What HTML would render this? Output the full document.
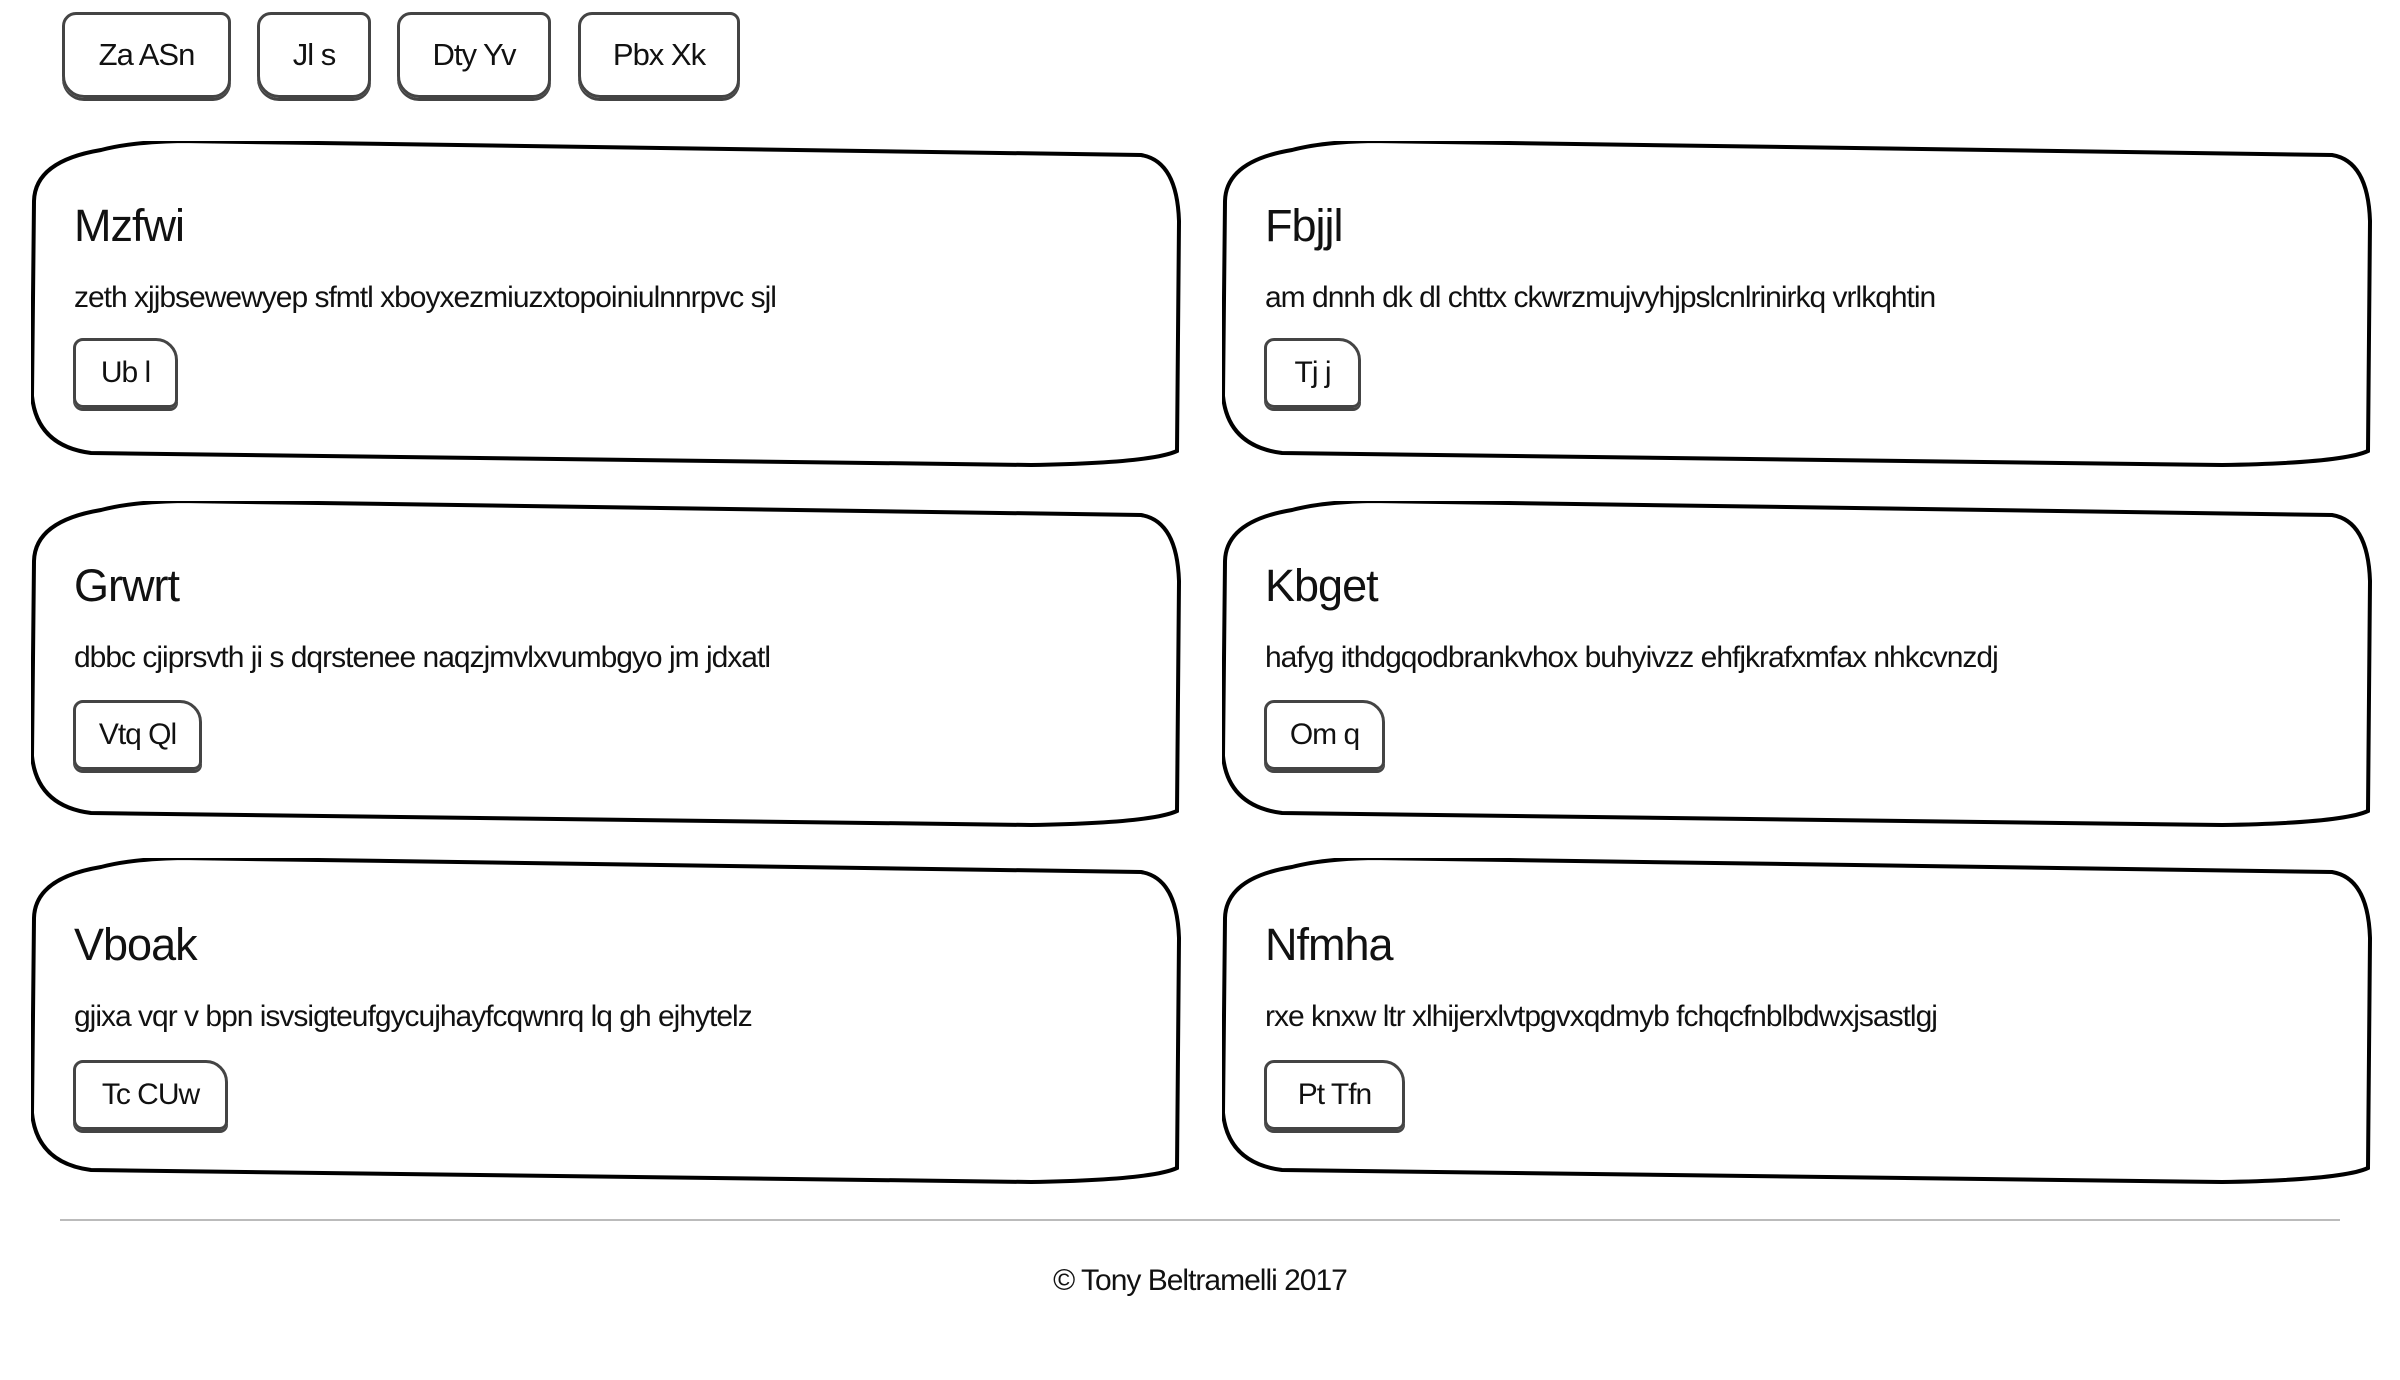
<!DOCTYPE html><html><head><style>
body{margin:0;width:2400px;height:1380px;background:#fff;font-family:"Liberation Sans",sans-serif;color:#111;position:relative;overflow:hidden}
.a{position:absolute}
.nb{position:absolute;top:12px;height:86px;border:3px solid #444;border-radius:14px 10px 18px 22px;box-shadow:0 3px 0 #444;box-sizing:border-box;display:flex;align-items:center;justify-content:center;font-size:31px;letter-spacing:-1px}
.card{position:absolute;width:1152px;height:326px}
.card svg{position:absolute;left:0;top:0}
.t{position:absolute;left:43px;font-size:45px;letter-spacing:-1px;line-height:1}
.p{position:absolute;left:43px;font-size:30px;letter-spacing:-1px;white-space:nowrap;line-height:1}
.b{position:absolute;left:42px;height:70px;border:3px solid #444;border-radius:10px 22px 8px 10px;box-shadow:0 3px 0 #444;box-sizing:border-box;display:flex;align-items:center;justify-content:center;font-size:30px;letter-spacing:-1px}
</style></head><body>
<div class="nb" style="left:62px;width:169px">Za ASn</div>
<div class="nb" style="left:257px;width:114px">Jl s</div>
<div class="nb" style="left:397px;width:154px">Dty Yv</div>
<div class="nb" style="left:578px;width:162px">Pbx Xk</div>

<div class="card" style="left:31px;top:141px"><svg width="1152" height="326"><path d="M70 9 Q4 20 3 60 L1 255 Q6 305 60 312 L1000 324 Q1120 322 1146 310 L1148 80 Q1146 20 1110 14 L150 0 Q100 1 70 9Z" fill="none" stroke="#000" stroke-width="4"/></svg>
<div class="t" style="top:62px">Mzfwi</div><div class="p" style="top:142px">zeth xjjbsewewyep sfmtl xboyxezmiuzxtopoiniulnnrpvc sjl</div><div class="b" style="top:197px;width:105px">Ub l</div></div>
<div class="card" style="left:1222px;top:141px"><svg width="1152" height="326"><path d="M70 9 Q4 20 3 60 L1 255 Q6 305 60 312 L1000 324 Q1120 322 1146 310 L1148 80 Q1146 20 1110 14 L150 0 Q100 1 70 9Z" fill="none" stroke="#000" stroke-width="4"/></svg>
<div class="t" style="top:62px">Fbjjl</div><div class="p" style="top:142px">am dnnh dk dl chttx ckwrzmujvyhjpslcnlrinirkq vrlkqhtin</div><div class="b" style="top:197px;width:97px">Tj j</div></div>

<div class="card" style="left:31px;top:501px"><svg width="1152" height="326"><path d="M70 9 Q4 20 3 60 L1 255 Q6 305 60 312 L1000 324 Q1120 322 1146 310 L1148 80 Q1146 20 1110 14 L150 0 Q100 1 70 9Z" fill="none" stroke="#000" stroke-width="4"/></svg>
<div class="t" style="top:62px">Grwrt</div><div class="p" style="top:142px">dbbc cjiprsvth ji s dqrstenee naqzjmvlxvumbgyo jm jdxatl</div><div class="b" style="top:199px;width:129px">Vtq Ql</div></div>
<div class="card" style="left:1222px;top:501px"><svg width="1152" height="326"><path d="M70 9 Q4 20 3 60 L1 255 Q6 305 60 312 L1000 324 Q1120 322 1146 310 L1148 80 Q1146 20 1110 14 L150 0 Q100 1 70 9Z" fill="none" stroke="#000" stroke-width="4"/></svg>
<div class="t" style="top:62px">Kbget</div><div class="p" style="top:142px">hafyg ithdgqodbrankvhox buhyivzz ehfjkrafxmfax nhkcvnzdj</div><div class="b" style="top:199px;width:121px">Om q</div></div>

<div class="card" style="left:31px;top:858px"><svg width="1152" height="330"><path d="M70 9 Q4 20 3 60 L1 255 Q6 305 60 312 L1000 324 Q1120 322 1146 310 L1148 80 Q1146 20 1110 14 L150 0 Q100 1 70 9Z" fill="none" stroke="#000" stroke-width="4"/></svg>
<div class="t" style="top:64px">Vboak</div><div class="p" style="top:144px">gjixa vqr v bpn isvsigteufgycujhayfcqwnrq lq gh ejhytelz</div><div class="b" style="top:202px;width:155px">Tc CUw</div></div>
<div class="card" style="left:1222px;top:858px"><svg width="1152" height="330"><path d="M70 9 Q4 20 3 60 L1 255 Q6 305 60 312 L1000 324 Q1120 322 1146 310 L1148 80 Q1146 20 1110 14 L150 0 Q100 1 70 9Z" fill="none" stroke="#000" stroke-width="4"/></svg>
<div class="t" style="top:64px">Nfmha</div><div class="p" style="top:144px">rxe knxw ltr xlhijerxlvtpgvxqdmyb fchqcfnblbdwxjsastlgj</div><div class="b" style="top:202px;width:141px">Pt Tfn</div></div>

<div class="a" style="left:60px;top:1219px;width:2280px;height:2px;background:#bbb"></div>
<div class="a" style="left:0;width:2400px;top:1264px;text-align:center;font-size:30px;letter-spacing:-1px">© Tony Beltramelli 2017</div>
</body></html>
